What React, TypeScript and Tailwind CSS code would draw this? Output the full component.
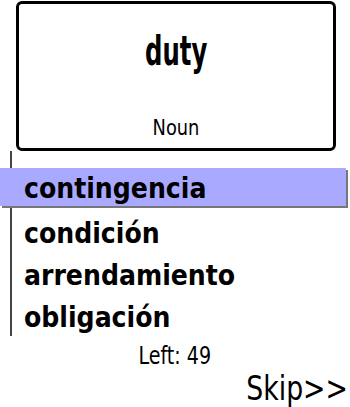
const narrow = "[font-family:'DejaVu_Sans_Condensed','DejaVu_Sans',sans-serif]";

const choices = ['contingencia', 'condición', 'arrendamiento', 'obligación'];

export default function App() {
  const selected = 0;
  return (
    <div className={`w-[350px] h-[407px] bg-white overflow-hidden text-black ${narrow}`}>
      <div className="ml-[16px] mt-[1px] w-[320px] h-[150px] border-[3px] border-black rounded-[6px] flex flex-col items-center">
        <div className="mt-[22px] h-[50px] flex items-center">
          <span className="inline-block text-[41px] font-bold leading-none scale-x-[0.66]">duty</span>
        </div>
        <div className="mt-auto mb-[6px]">
          <span className="inline-block text-[22px] leading-none scale-x-[0.9]">Noun</span>
        </div>
      </div>

      <div className="ml-[10px] w-[338px] border-l-2 border-[#444] pt-[17px] h-[185px]">
        {choices.map((c, i) =>
          i === selected ? (
            <div key={c} className="-ml-[12px] h-[42px] pb-[3px]">
              <div className="h-[38px] w-[346px] bg-[#a9a9ff] shadow-[2px_2px_0_#777] pl-[24px] pt-[4px] flex items-center">
                <span className="text-[28px] font-bold leading-none">{c}</span>
              </div>
            </div>
          ) : (
            <div key={c} className="h-[42px] pl-[12px] pt-[5px] flex items-center">
              <span className="text-[28px] font-bold leading-none">{c}</span>
            </div>
          )
        )}
      </div>

      <div className="mt-[7px] flex justify-center">
        <span className="inline-block text-[25px] leading-none scale-x-[0.85]">Left: 49</span>
      </div>
      <div className="mt-[4px] flex justify-end pr-[2px]">
        <span className="inline-block origin-right text-[33px] leading-none scale-x-[0.9]">Skip&gt;&gt;</span>
      </div>
    </div>
  );
}
